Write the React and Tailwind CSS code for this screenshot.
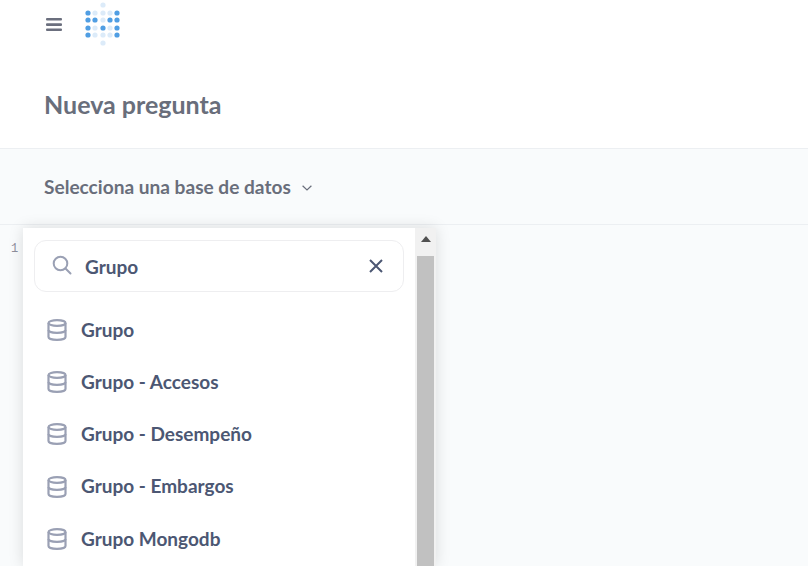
const logoDots = [
  [103, 5, 0],
  [88, 13, 1], [95, 13, 0], [103, 13, 0], [110, 13, 0], [117, 13, 1],
  [88, 20, 1], [95, 20, 1], [103, 20, 0], [110, 20, 1], [117, 20, 1],
  [88, 28, 1], [95, 28, 0], [103, 28, 1], [110, 28, 0], [117, 28, 1],
  [88, 35, 1], [95, 35, 0], [103, 35, 0], [110, 35, 0], [117, 35, 1],
  [103, 43, 0],
];

const databases = ['Grupo', 'Grupo - Accesos', 'Grupo - Desempeño', 'Grupo - Embargos', 'Grupo Mongodb'];

function Logo() {
  return (
    <svg width="38" height="46" viewBox="84 0 38 46" className="ml-[22px] shrink-0">
      {logoDots.map(([cx, cy, on]) => (
        <circle key={`${cx}-${cy}`} cx={cx} cy={cy} r="2.6" fill={on ? '#509ee3' : '#dcebf9'} />
      ))}
    </svg>
  );
}

function DbIcon() {
  return (
    <svg width="20" height="22" viewBox="0 0 20 22" fill="none" stroke="#9aa0b4" strokeWidth="2.200" className="shrink-0">
      <path d="M1.500 4C1.500 2.400 5.300 1.200 10 1.200s8.500 1.200 8.500 2.800-3.800 2.800-8.500 2.800S1.500 5.600 1.500 4Z" />
      <path d="M1.500 4v14c0 1.600 3.800 2.800 8.500 2.800s8.500-1.200 8.500-2.800V4" />
      <path d="M1.500 11c0 1.600 3.800 2.800 8.500 2.800s8.500-1.200 8.500-2.800" />
    </svg>
  );
}

export default function App() {
  return (
    <div className="relative h-[566px] w-[808px] overflow-hidden bg-white font-['Lato',sans-serif]">
      <div className="flex h-[46px] items-start bg-white pl-[46px]">
        <svg width="16" height="14" viewBox="0 0 16 14" className="mt-[18px] shrink-0" fill="#6b6f7e">
          <rect y="0" width="16" height="2.600" rx="1" />
          <rect y="5.300" width="16" height="2.600" rx="1" />
          <rect y="10.500" width="16" height="2.600" rx="1" />
        </svg>
        <Logo />
      </div>
      <div className="flex h-[103px] items-center border-b border-[#eceff2] pl-[44px]">
        <h1 className="mt-[15px] text-[25px] font-bold text-[#696e7b]">Nueva pregunta</h1>
      </div>
      <div className="flex h-[76px] items-center gap-[11px] border-b border-[#eceff2] bg-[#f9fbfc] pl-[44px]">
        <span className="mt-[1px] text-[19.100px] font-bold text-[#696e7b]">Selecciona una base de datos</span>
        <svg width="10" height="6" viewBox="0 0 10 6" fill="none" stroke="#696e7b" strokeWidth="1.200" className="mt-[2px]">
          <path d="M.6.8 5 5 9.400.8" />
        </svg>
      </div>
      <div className="h-[341px] bg-[#f9fbfc] pl-[11px] pt-[9px]">
        <span className="font-['Liberation_Mono',monospace] text-[12px] leading-[14px] text-[#8f8f9c]">1</span>
      </div>

      <div className="absolute left-[23px] top-[228px] flex h-[338px] w-[413px] bg-white shadow-[0_0_14px_rgba(0,0,0,0.13)]">
        <div className="w-[392px] pl-[11px] pt-[12px]">
          <div className="flex h-[52px] w-[370px] items-center rounded-[12px] border border-[#eeeef0] pl-[17px] pr-[19px]">
            <svg width="20" height="20" viewBox="0 0 20 20" fill="none" stroke="#9aa0b4" strokeWidth="2" className="-mt-[2px] shrink-0">
              <circle cx="8.500" cy="8.500" r="6.800" />
              <path d="m13.500 13.500 5 5" strokeLinecap="round" />
            </svg>
            <span className="ml-[13px] mt-[2px] flex-1 text-[19px] font-bold text-[#4c5773]">Grupo</span>
            <svg width="16" height="16" viewBox="0 0 16 16" fill="none" stroke="#4c5773" strokeWidth="2">
              <path d="m2 2 12 12M14 2 2 14" />
            </svg>
          </div>
          <ul className="mt-[12px] flex flex-col">
            {databases.map((name) => (
              <li key={name} className="flex h-[52.200px] shrink-0 items-center gap-[14px] pl-[13px]">
                <DbIcon />
                <span className="text-[19px] font-bold text-[#4c5773]">{name}</span>
              </li>
            ))}
          </ul>
        </div>
        <div className="flex w-[21px] flex-col items-center bg-[#f1f1f1]">
          <svg width="10" height="6" viewBox="0 0 10 6" fill="#505050" className="mt-[8px] shrink-0">
            <path d="M5 0 10 6H0Z" />
          </svg>
          <div className="mt-[14px] w-[17px] flex-1 bg-[#c1c1c1]" />
        </div>
      </div>
    </div>
  );
}
